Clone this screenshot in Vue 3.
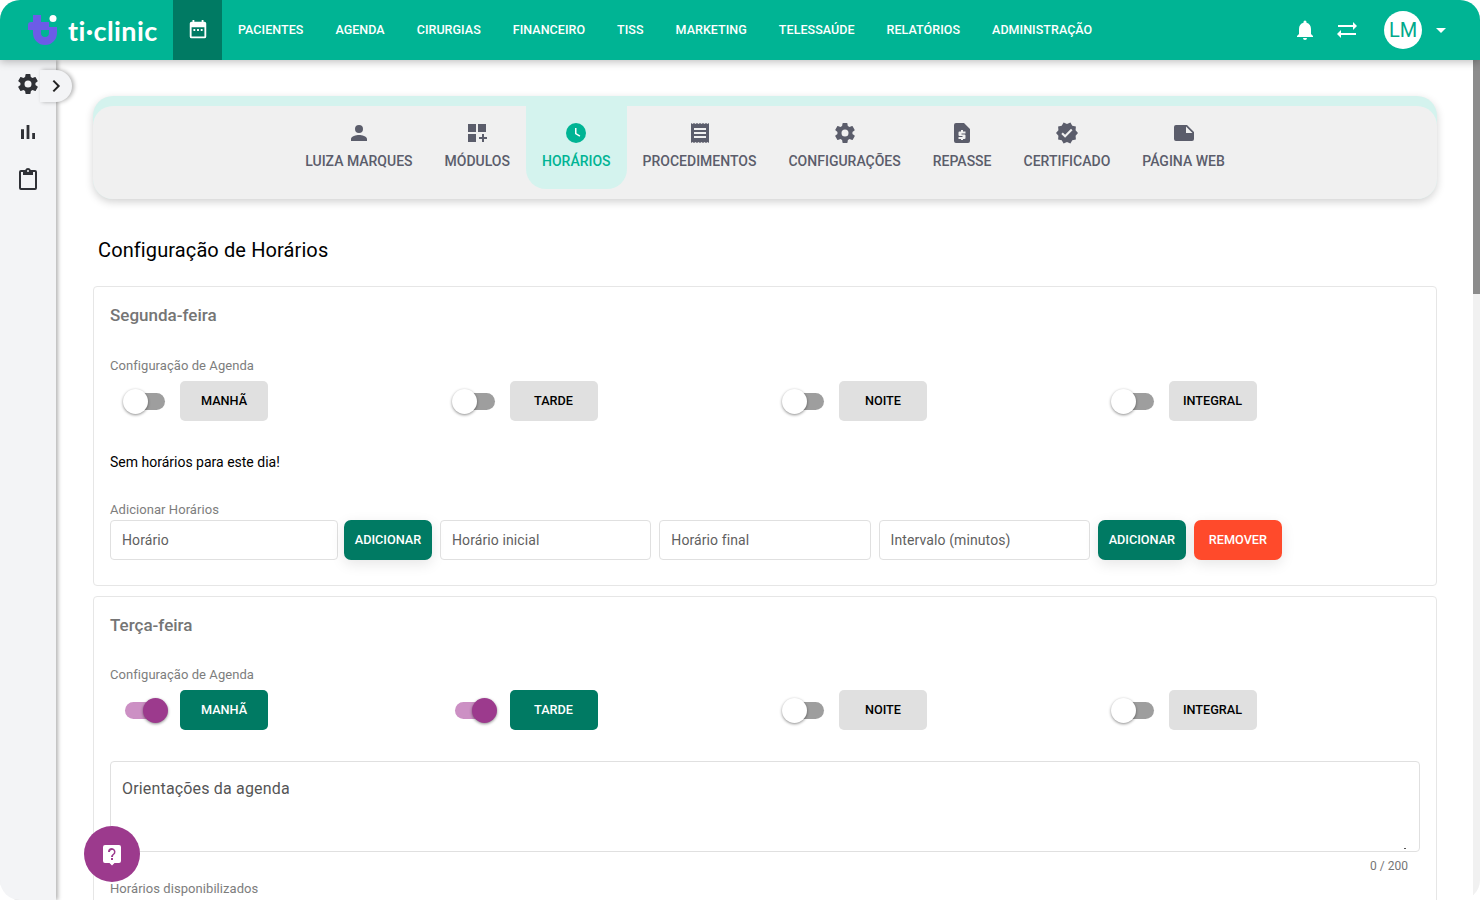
<template>
  <div class="window">
    <header class="topbar">
      <div class="brand">
        <svg class="brand-mark" width="30" height="31" viewBox="0 0 30 31">
          <path d="M9 0V18a8 8 0 0 0 16 0V12" fill="none" stroke="#6c5ce7" stroke-width="8" />
          <path d="M3 7h18v8H0v-5a3 3 0 0 1 3-3z" fill="#6c5ce7" />
          <circle cx="25" cy="3.500" r="3.500" fill="#fff" />
        </svg>
        <span class="brand-name">ti·clinic</span>
      </div>
      <div class="calendar-btn">
        <svg width="22" height="22" viewBox="0 0 24 24" fill="#fff">
          <path d="M19 3h-1V1h-2v2H8V1H6v2H5a2 2 0 0 0-2 2v14a2 2 0 0 0 2 2h14a2 2 0 0 0 2-2V5a2 2 0 0 0-2-2zm0 16H5V9h14v10zM7 11h2v2H7zm4 0h2v2h-2zm4 0h2v2h-2z" />
        </svg>
      </div>
      <nav class="menu">
        <a v-for="item in menu" :key="item" class="menu-item">{{ item }}</a>
      </nav>
      <div class="top-actions">
        <svg width="24" height="24" viewBox="0 0 24 24" fill="#fff">
          <path d="M12 22a2 2 0 0 0 2-2h-4a2 2 0 0 0 2 2zm6-6v-5c0-3.100-1.600-5.600-4.500-6.300V4a1.500 1.500 0 0 0-3 0v.7C7.600 5.400 6 7.900 6 11v5l-2 2v1h16v-1l-2-2z" />
        </svg>
        <svg class="swap" width="24" height="24" viewBox="0 0 24 24" fill="#fff">
          <path d="M22 8l-4-4v3H3v2h15v3l4-4zM2 16l4 4v-3h15v-2H6v-3l-4 4z" />
        </svg>
        <div class="avatar">LM</div>
        <span class="caret"></span>
      </div>
    </header>

    <div class="body">
      <aside class="sidebar">
        <svg width="24" height="24" viewBox="0 0 24 24" fill="#2f3136">
          <path :d="gearPath" />
        </svg>
        <svg width="24" height="24" viewBox="0 0 24 24" fill="#2f3136">
          <path d="M5 9.200h3V19H5zM10.600 5h2.800v14h-2.800zm5.600 8H19v6h-2.800z" />
        </svg>
        <svg class="clipboard" width="24" height="24" viewBox="0 0 24 24" fill="#2f3136">
          <path d="M19 3h-4.200A3 3 0 0 0 12 1a3 3 0 0 0-2.800 2H5a2 2 0 0 0-2 2v16a2 2 0 0 0 2 2h14a2 2 0 0 0 2-2V5a2 2 0 0 0-2-2zm-7 0a1 1 0 1 1 0 2 1 1 0 0 1 0-2zm7 18H5V5h2v3h10V5h2v16z" />
        </svg>
        <button class="expand">
          <svg width="16" height="16" viewBox="0 0 24 24" fill="none" stroke="#222" stroke-width="3">
            <path d="M8 4l8 8-8 8" />
          </svg>
        </button>
      </aside>

      <main class="content">
        <section class="tabs-shell">
          <div class="tabs">
            <div v-for="tab in tabs" :key="tab.label" class="tab" :class="{ active: tab.active }">
              <svg width="24" height="24" viewBox="0 0 24 24" :fill="tab.active ? '#00b494' : '#5b5d6b'">
                <path :d="tab.icon" />
                <path v-if="tab.active" d="M12.500 7h-1.500v6l4.500 2.700.8-1.200-3.800-2.300z" fill="#fff" />
              </svg>
              <span>{{ tab.label }}</span>
            </div>
          </div>
        </section>

        <h1 class="page-title">Configuração de Horários</h1>

        <section class="day-card first">
          <h2 class="day-title">Segunda-feira</h2>
          <p class="field-label agenda-label">Configuração de Agenda</p>
          <div class="periods">
            <div v-for="p in periodsOff" :key="p" class="period">
              <span class="switch"><i></i></span>
              <span class="period-btn">{{ p }}</span>
            </div>
          </div>
          <p class="empty">Sem horários para este dia!</p>
          <p class="field-label add-label">Adicionar Horários</p>
          <div class="add-row">
            <div class="input w-228">Horário</div>
            <span class="action green tight">ADICIONAR</span>
            <div class="input grow left-gap">Horário inicial</div>
            <div class="input grow">Horário final</div>
            <div class="input grow">Intervalo (minutos)</div>
            <span class="action green">ADICIONAR</span>
            <span class="action red">REMOVER</span>
          </div>
        </section>

        <section class="day-card">
          <h2 class="day-title">Terça-feira</h2>
          <p class="field-label agenda-label second">Configuração de Agenda</p>
          <div class="periods">
            <div v-for="p in periodsTue" :key="p.name" class="period">
              <span class="switch" :class="{ on: p.on }"><i></i></span>
              <span class="period-btn" :class="{ selected: p.on }">{{ p.name }}</span>
            </div>
          </div>
          <div class="notes">Orientações da agenda</div>
          <div class="counter">0 / 200</div>
          <p class="field-label offered">Horários disponibilizados</p>
          <div class="chips">
            <span v-for="n in 6" :key="n" class="chip"></span>
          </div>
        </section>
      </main>

      <div class="scrollbar"><div class="thumb"></div></div>
    </div>

    <button class="help">
      <svg width="24" height="24" viewBox="0 0 24 24">
        <path d="M5 3h14a2 2 0 0 1 2 2v14a2 2 0 0 1-2 2h-4.500L12 23.500 9.500 21H5a2 2 0 0 1-2-2V5a2 2 0 0 1 2-2z" fill="#fff" />
        <path d="M11 16h2v2h-2zM12 6a4 4 0 0 0-4 4h2a2 2 0 1 1 3.400 1.400l-1.200 1.200A3.800 3.800 0 0 0 11 15h2c0-1.100.4-1.600 1.200-2.400l.9-.9A4 4 0 0 0 12 6z" fill="#9c3a8d" />
      </svg>
    </button>
  </div>
</template>

<script setup>
const menu = ['PACIENTES', 'AGENDA', 'CIRURGIAS', 'FINANCEIRO', 'TISS', 'MARKETING', 'TELESSAÚDE', 'RELATÓRIOS', 'ADMINISTRAÇÃO']

const gearPath = 'M19.400 13c.04-.3.1-.7.1-1s0-.7-.1-1l2.100-1.600c.2-.2.2-.4.1-.6l-2-3.500c-.1-.2-.4-.3-.6-.2l-2.500 1c-.5-.4-1.100-.7-1.700-1l-.4-2.600A.5.500 0 0 0 14 2h-4a.5.500 0 0 0-.5.400l-.4 2.600c-.6.300-1.200.6-1.700 1l-2.500-1c-.2-.1-.5 0-.6.2l-2 3.500c-.1.200-.1.400.1.600L4.500 11c0 .3-.1.700-.1 1s0 .7.1 1l-2.100 1.600c-.2.200-.2.400-.1.600l2 3.500c.1.200.4.300.6.200l2.500-1c.5.400 1.100.7 1.700 1l.4 2.600c0 .3.200.4.500.4h4c.3 0 .5-.2.500-.4l.4-2.600c.6-.3 1.200-.6 1.700-1l2.500 1c.2.100.5 0 .6-.2l2-3.500c.1-.2.1-.4-.1-.6L19.400 13zM12 15.500a3.500 3.500 0 1 1 0-7 3.500 3.500 0 0 1 0 7z'

const tabs = [
  { label: 'LUIZA MARQUES', icon: 'M12 12a4 4 0 1 0 0-8 4 4 0 0 0 0 8zm0 2c-2.700 0-8 1.300-8 4v2h16v-2c0-2.700-5.300-4-8-4z' },
  { label: 'MÓDULOS', icon: 'M3 3h8v8H3zm10 0h8v8h-8zM3 13h8v8H3zm14 0h2v3h3v2h-3v3h-2v-3h-3v-2h3z' },
  { label: 'HORÁRIOS', active: true, icon: 'M12 2a10 10 0 1 0 0 20 10 10 0 0 0 0-20z' },
  { label: 'PROCEDIMENTOS', icon: 'M3 2l1.500 1L6 2l1.500 1L9 2l1.500 1L12 2l1.500 1L15 2l1.500 1L18 2l1.500 1L21 2v20l-1.500-1-1.500 1-1.500-1-1.500 1-1.500-1-1.500 1-1.500-1L9 22l-1.500-1L6 22l-1.500-1L3 22V2zm3 5v2h12V7H6zm0 4v2h12v-2H6zm0 4v2h12v-2H6z' },
  { label: 'CONFIGURAÇÕES', icon: gearPath },
  { label: 'REPASSE', icon: 'M6 2h8l6 6v12a2 2 0 0 1-2 2H6a2 2 0 0 1-2-2V4a2 2 0 0 1 2-2zm7 8.500V9h-2v1.500H9.500a1 1 0 0 0-1 1V14a1 1 0 0 0 1 1h3v1H8.500v2H11v1h2v-1h1.500a1 1 0 0 0 1-1v-2.500a1 1 0 0 0-1-1h-3v-1h4v-2H13z' },
  { label: 'CERTIFICADO', icon: 'M23 12l-2.400-2.800.3-3.700-3.600-.8-1.900-3.200L12 3 8.600 1.500 6.700 4.700l-3.600.8.3 3.700L1 12l2.400 2.800-.3 3.700 3.600.8 1.900 3.200L12 21l3.400 1.500 1.900-3.200 3.600-.8-.3-3.700L23 12zm-12.900 4.700l-3.800-3.800 1.500-1.500 2.300 2.300 5.900-5.900 1.500 1.500-7.400 7.400z' },
  { label: 'PÁGINA WEB', icon: 'M4 4h11l7 7v7a2 2 0 0 1-2 2H4a2 2 0 0 1-2-2V6a2 2 0 0 1 2-2zm10 1.500V12h6.500L14 5.500z' }
]

const periodsOff = ['MANHÃ', 'TARDE', 'NOITE', 'INTEGRAL']
const periodsTue = [
  { name: 'MANHÃ', on: true },
  { name: 'TARDE', on: true },
  { name: 'NOITE', on: false },
  { name: 'INTEGRAL', on: false }
]
</script>

<style>
html, body {
  margin: 0;
  background: #fff;
  overflow: hidden;
}
</style>

<style scoped>
.window {
  position: relative;
  width: 1480px;
  height: 900px;
  overflow: hidden;
  border-radius: 20px;
  background: #fff;
  font-family: Roboto, "Liberation Sans", sans-serif;
  color: #000;
}

.topbar {
  position: relative;
  z-index: 3;
  display: flex;
  align-items: center;
  height: 60px;
  background: #00b494;
  box-shadow: 0 2px 8px rgba(0, 0, 0, 0.25);
}

.brand {
  display: flex;
  align-items: center;
  width: 173px;
  padding-left: 28px;
  box-sizing: border-box;
}
.brand-name {
  margin-left: 10px;
  color: #fff;
  font-family: Lato, sans-serif;
  font-size: 27px;
  font-weight: 700;
  letter-spacing: 0.4px;
}

.calendar-btn {
  display: flex;
  align-items: center;
  justify-content: center;
  width: 49px;
  height: 60px;
  background: #007a63;
}

.menu {
  display: flex;
  gap: 32px;
  padding-left: 16px;
  margin-top: -1px;
}
.menu-item {
  color: #fff;
  font-size: 12.500px;
  font-weight: 500;
  letter-spacing: 0.05px;
}

.top-actions {
  display: flex;
  align-items: center;
  margin-left: auto;
  padding-right: 34px;
}
.swap {
  margin-left: 18px;
}
.avatar {
  display: flex;
  align-items: center;
  justify-content: center;
  width: 38px;
  height: 38px;
  margin-left: 25px;
  border-radius: 50%;
  background: #fff;
  color: #00a98b;
  font-size: 20px;
}
.caret {
  width: 0;
  height: 0;
  margin-left: 14px;
  border-left: 5px solid transparent;
  border-right: 5px solid transparent;
  border-top: 5px solid #fff;
}

.body {
  display: flex;
  height: 840px;
}

.sidebar {
  position: relative;
  z-index: 2;
  flex: none;
  display: flex;
  flex-direction: column;
  align-items: center;
  gap: 24px;
  box-sizing: border-box;
  width: 56px;
  padding-top: 12px;
  background: #f3f4f6;
  box-shadow: 2px 0 4px rgba(0, 0, 0, 0.3);
}
.clipboard {
  margin-top: -1px;
}
.expand {
  position: absolute;
  top: 10px;
  right: -16px;
  display: flex;
  align-items: center;
  justify-content: flex-end;
  width: 32px;
  height: 32px;
  padding: 0 8px 0 0;
  border: 0;
  border-radius: 0 16px 16px 0;
  background: #f3f4f6;
  box-shadow: 2px 0 4px rgba(0, 0, 0, 0.3);
}

.content {
  flex: 1;
  min-width: 0;
  overflow: hidden;
  padding: 36px 43px 0 37px;
}

.tabs-shell {
  height: 103px;
  padding-top: 10px;
  box-sizing: border-box;
  border-radius: 20px;
  background: #d4f3ee;
  box-shadow: 0 3px 8px rgba(0, 0, 0, 0.18);
}
.tabs {
  display: flex;
  justify-content: center;
  height: 93px;
  border-radius: 20px;
  background: #f0f0f0;
}
.tab {
  display: flex;
  flex-direction: column;
  align-items: center;
  box-sizing: border-box;
  height: 83px;
  padding: 15px 16px 0;
  color: #5b5d6b;
  font-size: 14px;
  font-weight: 500;
}
.tab span {
  margin-top: 8px;
}
.tab.active {
  border-radius: 0 0 20px 20px;
  background: #d4f3ee;
  color: #00b494;
}

.page-title {
  margin: 38px 0 23px 5px;
  font-size: 20px;
  font-weight: 400;
  letter-spacing: 0.11px;
  line-height: 26px;
}

.day-card {
  box-sizing: border-box;
  margin-bottom: 10px;
  padding: 0 16px;
  border: 1px solid #e6e6e6;
  border-radius: 4px;
}
.day-card.first {
  height: 300px;
}

.day-title {
  margin: 18px 0 0;
  color: #757575;
  font-size: 17px;
  font-weight: 500;
  line-height: 20px;
}
.field-label {
  margin: 0;
  color: #7d7d7d;
  font-size: 13px;
  letter-spacing: 0.06px;
  line-height: 16px;
}
.agenda-label {
  margin-top: 33px;
}
.agenda-label.second {
  margin-top: 32px;
}

.periods {
  display: grid;
  grid-template-columns: repeat(4, 329.500px);
  margin-top: 7px;
}
.period {
  display: flex;
  align-items: center;
}
.switch {
  position: relative;
  width: 40px;
  height: 17px;
  margin: 0 15px 0 15px;
  border-radius: 9px;
  background: #9e9e9e;
}
.switch i {
  position: absolute;
  top: -4px;
  left: -2.500px;
  width: 25px;
  height: 25px;
  border-radius: 50%;
  background: #fff;
  box-shadow: 0 1px 3px rgba(0, 0, 0, 0.45);
}
.switch.on {
  background: #cc90c4;
}
.switch.on i {
  left: auto;
  right: -2.500px;
  background: #9c3a8d;
}
.period-btn {
  display: flex;
  align-items: center;
  justify-content: center;
  box-sizing: border-box;
  width: 88px;
  height: 40px;
  padding-bottom: 1px;
  border-radius: 5px;
  background: #e0e0e0;
  font-size: 12.700px;
  font-weight: 500;
}
.period-btn.selected {
  background: #007a63;
  color: #fff;
}

.empty {
  margin: 32px 0 0;
  font-size: 14px;
  line-height: 18px;
}
.add-label {
  margin-top: 31px;
}

.add-row {
  display: flex;
  align-items: center;
  gap: 8px;
  margin-top: 2px;
}
.input {
  display: flex;
  align-items: center;
  box-sizing: border-box;
  height: 40px;
  padding: 0 11px;
  border: 1px solid #e0e0e0;
  border-radius: 4px;
  color: #5f5f5f;
  font-size: 14px;
  letter-spacing: 0.1px;
}
.w-228 {
  width: 228px;
}
.grow {
  width: 211.300px;
}
.action {
  display: flex;
  align-items: center;
  justify-content: center;
  flex: none;
  box-sizing: border-box;
  width: 88px;
  height: 40px;
  padding-bottom: 1px;
  border-radius: 7px;
  color: #fff;
  font-size: 12.700px;
  font-weight: 500;
  box-shadow: 0 4px 14px rgba(0, 0, 0, 0.1);
}
.action.tight {
  margin-left: -2px;
}
.green {
  background: #007a63;
}
.red {
  background: #ff4a2b;
}

.notes {
  position: relative;
  box-sizing: border-box;
  height: 91px;
  margin-top: 31px;
  padding: 16px 11px;
  border: 1px solid #e0e0e0;
  border-radius: 4px;
  color: #555;
  font-size: 16px;
  letter-spacing: 0.17px;
  line-height: 22px;
}
.notes::after {
  content: "";
  position: absolute;
  right: 13px;
  bottom: 2px;
  width: 2px;
  height: 1px;
  background: #555;
}
.counter {
  margin-top: 6px;
  padding-right: 12px;
  color: #757575;
  font-size: 12px;
  line-height: 16px;
  text-align: right;
}
.offered {
  margin-top: 7px;
}
.chips {
  display: flex;
  gap: 15px;
  margin-top: 3px;
  padding-left: 3px;
}
.chip {
  width: 58px;
  height: 32px;
  border-radius: 6px;
  background: #007a63;
}

.scrollbar {
  position: absolute;
  top: 60px;
  right: 0;
  z-index: 2;
  width: 7px;
  height: 840px;
  background: #f1f1f1;
}
.thumb {
  height: 234px;
  background: #8c8c8c;
}

.help {
  position: absolute;
  left: 84px;
  top: 826px;
  z-index: 4;
  display: flex;
  align-items: center;
  justify-content: center;
  width: 56px;
  height: 56px;
  padding: 0;
  border: 0;
  border-radius: 50%;
  background: #9c3a8d;
}
</style>
